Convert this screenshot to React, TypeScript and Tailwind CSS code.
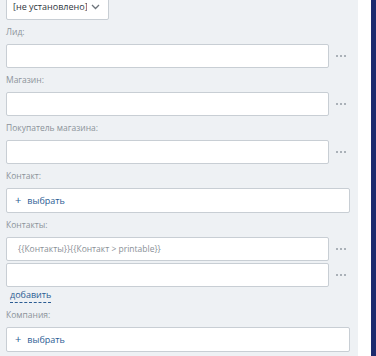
import React from "react";

function Dots() {
  return (
    <div className="flex w-[20px] items-center justify-center gap-[2px]">
      <span className="h-[2px] w-[2px] bg-[#aab1b8]" />
      <span className="h-[2px] w-[2px] bg-[#aab1b8]" />
      <span className="h-[2px] w-[2px] bg-[#aab1b8]" />
    </div>
  );
}

function Label({ children }: { children: React.ReactNode }) {
  return <div className="mt-[5px] mb-[5px] text-[8.5px] leading-[14px] text-[#8c939a]">{children}</div>;
}

function TextRow({ value }: { value?: string }) {
  return (
    <div className="flex items-center">
      <div className="flex h-[24px] w-[323px] items-center rounded-[2px] border border-[#c8ced4] bg-white pl-[11px] text-[8.5px] text-[#8a9097]">
        {value}
      </div>
      <div className="ml-[2px]">
        <Dots />
      </div>
    </div>
  );
}

function PickRow() {
  return (
    <div className="flex h-[25px] w-[344px] items-center rounded-[2px] border border-[#c8ced4] bg-white pl-[8px] text-[9px] text-[#2b5c93]">
      <span className="mr-[6px] text-[11px]">+</span>
      <span>выбрать</span>
    </div>
  );
}

export default function App() {
  return (
    <div className="flex h-[356px] w-[376px] overflow-hidden" style={{ fontFamily: '"Open Sans", "Liberation Sans", sans-serif' }}>
      <div className="w-[358px] bg-[#eef1f4] pl-[6px]">
        <div className="mt-[-6px] flex h-[26px] w-[103px] items-center justify-between rounded-[2px] border border-[#c8ced4] bg-white pr-[8px] pl-[6px] text-[9px] text-[#2f363d]">
          <span className="overflow-hidden whitespace-nowrap">[не установлено]</span>
          <svg width="9" height="6" viewBox="0 0 9 6" className="ml-[4px] shrink-0">
            <path d="M1 1l3.5 3.5L8 1" fill="none" stroke="#6d747b" strokeWidth="1.3" />
          </svg>
        </div>

        <div className="mt-[1px]" />
        <Label>Лид:</Label>
        <TextRow />
        <Label>Магазин:</Label>
        <TextRow />
        <Label>Покупатель магазина:</Label>
        <TextRow />
        <Label>Контакт:</Label>
        <PickRow />
        <Label>Контакты:</Label>
        <TextRow value="{{Контакты}}{{Контакт > printable}}" />
        <div className="mt-[2px]" />
        <TextRow />
        <div className="mt-[1px] ml-[4px] w-fit border-b border-dashed border-[#2b5c93] text-[9px] leading-[14px] text-[#2b5c93]">
          добавить
        </div>
        <Label>Компания:</Label>
        <PickRow />
      </div>
      <div className="w-[13px] bg-white" />
      <div className="flex-1 bg-[#1c2b6e]" />
    </div>
  );
}
